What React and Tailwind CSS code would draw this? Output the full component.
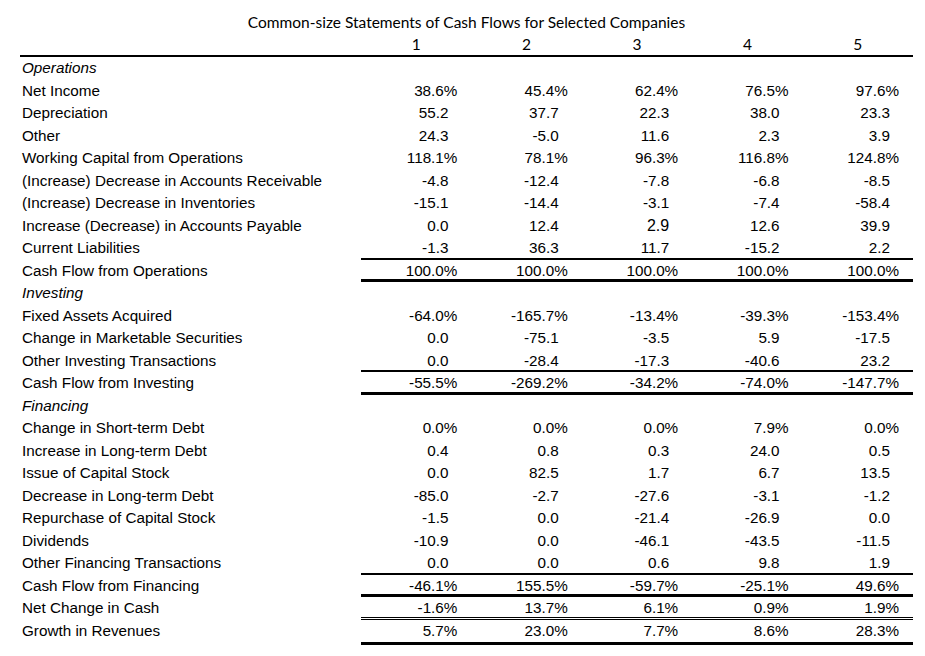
import React from "react";

const rows = [
  { label: "Operations", italic: true },
  { label: "Net Income", v: ["38.6%", "45.4%", "62.4%", "76.5%", "97.6%"] },
  { label: "Depreciation", v: ["55.2", "37.7", "22.3", "38.0", "23.3"] },
  { label: "Other", v: ["24.3", "-5.0", "11.6", "2.3", "3.9"] },
  { label: "Working Capital from Operations", v: ["118.1%", "78.1%", "96.3%", "116.8%", "124.8%"] },
  { label: "(Increase) Decrease in Accounts Receivable", v: ["-4.8", "-12.4", "-7.8", "-6.8", "-8.5"] },
  { label: "(Increase) Decrease in Inventories", v: ["-15.1", "-14.4", "-3.1", "-7.4", "-58.4"] },
  { label: "Increase (Decrease) in Accounts Payable", v: ["0.0", "12.4", "2.9", "12.6", "39.9"], big: 2 },
  { label: "Current Liabilities", v: ["-1.3", "36.3", "11.7", "-15.2", "2.2"], line: "b2" },
  { label: "Cash Flow from Operations", v: ["100.0%", "100.0%", "100.0%", "100.0%", "100.0%"], line: "b3" },
  { label: "Investing", italic: true },
  { label: "Fixed Assets Acquired", v: ["-64.0%", "-165.7%", "-13.4%", "-39.3%", "-153.4%"] },
  { label: "Change in Marketable Securities", v: ["0.0", "-75.1", "-3.5", "5.9", "-17.5"] },
  { label: "Other Investing Transactions", v: ["0.0", "-28.4", "-17.3", "-40.6", "23.2"], line: "b2" },
  { label: "Cash Flow from Investing", v: ["-55.5%", "-269.2%", "-34.2%", "-74.0%", "-147.7%"], line: "b3" },
  { label: "Financing", italic: true },
  { label: "Change in Short-term Debt", v: ["0.0%", "0.0%", "0.0%", "7.9%", "0.0%"] },
  { label: "Increase in Long-term Debt", v: ["0.4", "0.8", "0.3", "24.0", "0.5"] },
  { label: "Issue of Capital Stock", v: ["0.0", "82.5", "1.7", "6.7", "13.5"] },
  { label: "Decrease in Long-term Debt", v: ["-85.0", "-2.7", "-27.6", "-3.1", "-1.2"] },
  { label: "Repurchase of Capital Stock", v: ["-1.5", "0.0", "-21.4", "-26.9", "0.0"] },
  { label: "Dividends", v: ["-10.9", "0.0", "-46.1", "-43.5", "-11.5"] },
  { label: "Other Financing Transactions", v: ["0.0", "0.0", "0.6", "9.8", "1.9"], line: "b2" },
  { label: "Cash Flow from Financing", v: ["-46.1%", "155.5%", "-59.7%", "-25.1%", "49.6%"], line: "b3" },
  { label: "Net Change in Cash", v: ["-1.6%", "13.7%", "6.1%", "0.9%", "1.9%"], line: "dbl" },
  { label: "Growth in Revenues", v: ["5.7%", "23.0%", "7.7%", "8.6%", "28.3%"] },
];

function lineClass(line) {
  if (line === "b2") return "border-b-2 border-black";
  if (line === "b3") return "border-b-[3px] border-black";
  if (line === "dbl") return "border-b-[3px] border-double border-black";
  return "";
}

export default function App() {
  return (
    <div
      className="w-[925px] h-[656px] bg-white text-black overflow-hidden"
      style={{ fontFamily: '"Liberation Sans", Arial, sans-serif' }}
    >
      <div className="ml-[20px] w-[893px]">
        <div className="h-[57px] border-b-2 border-black flex flex-col">
          <div
            className="h-[34px] pt-[11px] leading-[22px] text-[15.5px] text-center"
            style={{ fontFamily: 'Lato, "Open Sans", sans-serif' }}
          >
            Common-size Statements of Cash Flows for Selected Companies
          </div>
          <div className="flex h-[21px]">
            <div className="w-[341px]" />
            <div
              className="flex-1 grid grid-cols-5 text-[15.5px] leading-[21px]"
              style={{ fontFamily: 'Lato, "Open Sans", sans-serif' }}
            >
              {["1", "2", "3", "4", "5"].map((n) => (
                <div key={n} className="text-center">
                  {n}
                </div>
              ))}
            </div>
          </div>
        </div>
        {rows.map((r, i) => (
          <div key={i} className="flex h-[22.5px] text-[15.25px] leading-[22px]">
            <div className={"w-[341px] pl-[2px] whitespace-nowrap " + (r.italic ? "italic" : "")}>
              {r.label}
            </div>
            <div className={"flex-1 grid grid-cols-5 box-border " + lineClass(r.line)}>
              {(r.v || ["", "", "", "", ""]).map((val, j) => (
                <div
                  key={j}
                  className={
                    "text-right whitespace-nowrap " +
                    (val.endsWith("%") ? "pr-[14px] " : "pr-[23px] ") +
                    (r.big === j ? "text-[16px]" : "")
                  }
                >
                  {val}
                </div>
              ))}
            </div>
          </div>
        ))}
        <div className="flex">
          <div className="w-[341px]" />
          <div className="flex-1 h-[3px] bg-black" />
        </div>
      </div>
    </div>
  );
}
